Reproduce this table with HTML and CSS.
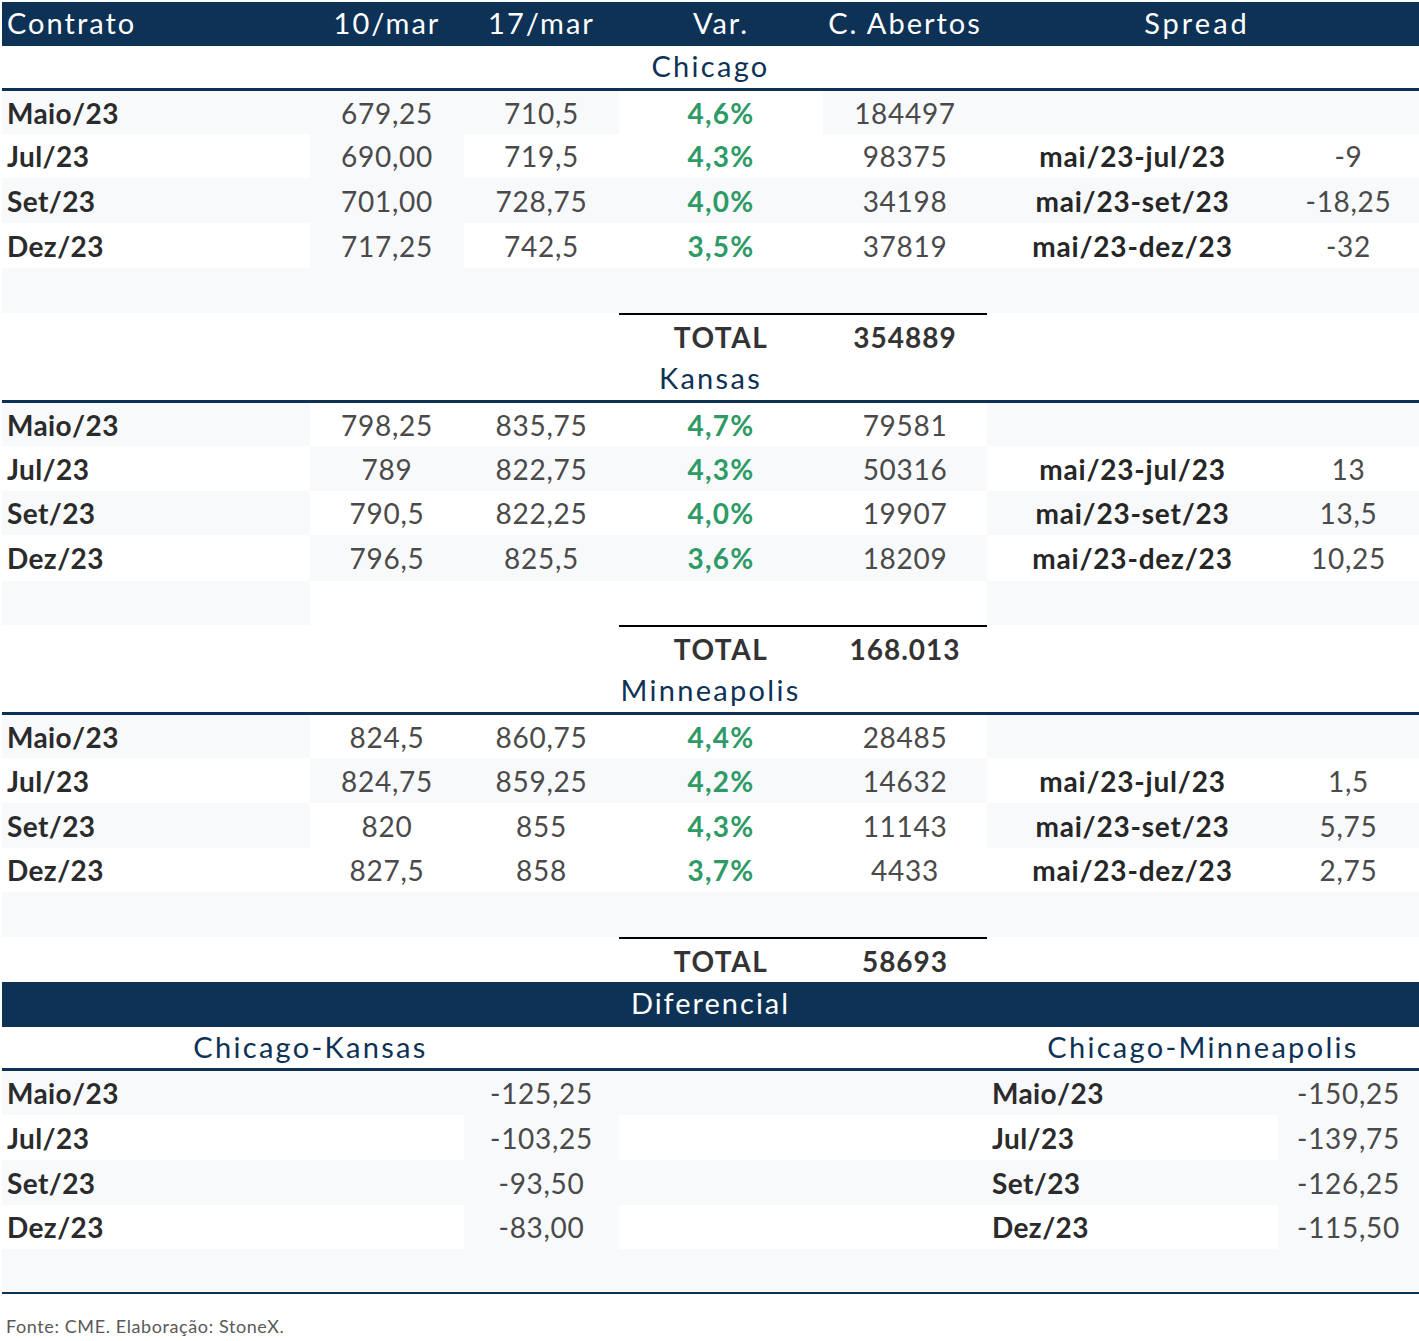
FILE: index.html
```html
<!DOCTYPE html>
<html lang="pt">
<head>
<meta charset="utf-8">
<title>Contratos de trigo</title>
<link rel="stylesheet" href="styles.css">
</head>
<body>
<div class="sheet">
  <div class="row head h44">
    <div class="c left">Contrato</div>
    <div class="c">10/mar</div>
    <div class="c">17/mar</div>
    <div class="c">Var.</div>
    <div class="c">C. Abertos</div>
    <div class="c span2 spread">Spread</div>
  </div>

  <div class="row title h45"><div class="c span7">Chicago</div></div>
  <div class="row h43">
    <div class="c lbl l">Maio/23</div><div class="c num l">679,25</div><div class="c num l">710,5</div><div class="c var">4,6%</div><div class="c num l">184497</div><div class="c l"></div><div class="c l"></div>
  </div>
  <div class="row h44">
    <div class="c lbl">Jul/23</div><div class="c num l">690,00</div><div class="c num">719,5</div><div class="c var">4,3%</div><div class="c num">98375</div><div class="c sp">mai/23-jul/23</div><div class="c num">-9</div>
  </div>
  <div class="row h45">
    <div class="c lbl l">Set/23</div><div class="c num l">701,00</div><div class="c num l">728,75</div><div class="c var l">4,0%</div><div class="c num l">34198</div><div class="c sp l">mai/23-set/23</div><div class="c num l">-18,25</div>
  </div>
  <div class="row h45">
    <div class="c lbl">Dez/23</div><div class="c num l">717,25</div><div class="c num">742,5</div><div class="c var">3,5%</div><div class="c num">37819</div><div class="c sp">mai/23-dez/23</div><div class="c num">-32</div>
  </div>
  <div class="row h45 l"></div>
  <div class="row h45">
    <div class="c"></div><div class="c"></div><div class="c"></div><div class="c tot">TOTAL</div><div class="c tot totv">354889</div><div class="c"></div><div class="c"></div>
  </div>

  <div class="row title h45"><div class="c span7">Kansas</div></div>
  <div class="row h43">
    <div class="c lbl l">Maio/23</div><div class="c num">798,25</div><div class="c num">835,75</div><div class="c var">4,7%</div><div class="c num">79581</div><div class="c l"></div><div class="c l"></div>
  </div>
  <div class="row h45">
    <div class="c lbl">Jul/23</div><div class="c num l">789</div><div class="c num l">822,75</div><div class="c var l">4,3%</div><div class="c num l">50316</div><div class="c sp">mai/23-jul/23</div><div class="c num">13</div>
  </div>
  <div class="row h44">
    <div class="c lbl l">Set/23</div><div class="c num">790,5</div><div class="c num">822,25</div><div class="c var">4,0%</div><div class="c num">19907</div><div class="c sp l">mai/23-set/23</div><div class="c num l">13,5</div>
  </div>
  <div class="row h46">
    <div class="c lbl">Dez/23</div><div class="c num l">796,5</div><div class="c num l">825,5</div><div class="c var l">3,6%</div><div class="c num l">18209</div><div class="c sp">mai/23-dez/23</div><div class="c num">10,25</div>
  </div>
  <div class="row h44">
    <div class="c l"></div><div class="c"></div><div class="c"></div><div class="c"></div><div class="c"></div><div class="c l"></div><div class="c l"></div>
  </div>
  <div class="row h45">
    <div class="c"></div><div class="c"></div><div class="c"></div><div class="c tot">TOTAL</div><div class="c tot totv">168.013</div><div class="c"></div><div class="c"></div>
  </div>

  <div class="row title h45"><div class="c span7">Minneapolis</div></div>
  <div class="row h43">
    <div class="c lbl l">Maio/23</div><div class="c num">824,5</div><div class="c num">860,75</div><div class="c var">4,4%</div><div class="c num">28485</div><div class="c l"></div><div class="c l"></div>
  </div>
  <div class="row h45">
    <div class="c lbl">Jul/23</div><div class="c num l">824,75</div><div class="c num l">859,25</div><div class="c var l">4,2%</div><div class="c num l">14632</div><div class="c sp">mai/23-jul/23</div><div class="c num">1,5</div>
  </div>
  <div class="row h45">
    <div class="c lbl l">Set/23</div><div class="c num">820</div><div class="c num">855</div><div class="c var">4,3%</div><div class="c num">11143</div><div class="c sp l">mai/23-set/23</div><div class="c num l">5,75</div>
  </div>
  <div class="row h44">
    <div class="c lbl">Dez/23</div><div class="c num">827,5</div><div class="c num">858</div><div class="c var">3,7%</div><div class="c num">4433</div><div class="c sp">mai/23-dez/23</div><div class="c num">2,75</div>
  </div>
  <div class="row h45 l"></div>
  <div class="row h45">
    <div class="c"></div><div class="c"></div><div class="c"></div><div class="c tot">TOTAL</div><div class="c tot totv">58693</div><div class="c"></div><div class="c"></div>
  </div>

  <div class="row head h45"><div class="c span7">Diferencial</div></div>
  <div class="row title h44">
    <div class="c span3">Chicago-Kansas</div><div class="c span2"></div><div class="c span2">Chicago-Minneapolis</div>
  </div>
  <div class="row h44 l">
    <div class="c lbl">Maio/23</div><div class="c"></div><div class="c num">-125,25</div><div class="c"></div><div class="c"></div><div class="c lbl">Maio/23</div><div class="c num">-150,25</div>
  </div>
  <div class="row h45">
    <div class="c lbl">Jul/23</div><div class="c"></div><div class="c num l">-103,25</div><div class="c"></div><div class="c"></div><div class="c lbl">Jul/23</div><div class="c num l">-139,75</div>
  </div>
  <div class="row h45 l">
    <div class="c lbl">Set/23</div><div class="c"></div><div class="c num">-93,50</div><div class="c"></div><div class="c"></div><div class="c lbl">Set/23</div><div class="c num">-126,25</div>
  </div>
  <div class="row h44">
    <div class="c lbl">Dez/23</div><div class="c"></div><div class="c num l">-83,00</div><div class="c"></div><div class="c"></div><div class="c lbl">Dez/23</div><div class="c num l">-115,50</div>
  </div>
  <div class="row last h45 l"></div>
</div>
<p class="note">Fonte: CME. Elaboração: StoneX.</p>
</body>
</html>
```

FILE: styles.css
```css
html, body {
  margin: 0;
  padding: 0;
  background: #ffffff;
}
body {
  padding: 2px 0 0 2px;
  font-family: Lato, "Open Sans", sans-serif;
  color: #333333;
}
.sheet {
  width: 1417px;
}
.row {
  display: grid;
  grid-template-columns: 308px 154px 155px 204px 164px 291px 141px;
  box-sizing: border-box;
}
.h43 { height: 43px; }
.h44 { height: 44px; }
.h45 { height: 45px; }
.h46 { height: 46px; }
.c {
  display: flex;
  align-items: center;
  justify-content: center;
  font-size: 28px;
  white-space: nowrap;
  box-sizing: border-box;
  min-width: 0;
}
.span2 { grid-column: span 2; }
.span3 { grid-column: span 3; }
.span7 { grid-column: span 7; }
.l { background: #f8f9fb; }
.head {
  background: #0d3255;
  color: #ffffff;
}
.head .c {
  font-size: 29px;
  letter-spacing: 2px;
  padding-bottom: 4px;
}
.head .left {
  justify-content: flex-start;
  padding-left: 5px;
}
.head .spread {
  padding-right: 12px;
  letter-spacing: 3px;
}
.title {
  border-bottom: 3px solid #0d3255;
}
.title .c {
  color: #0d3255;
  font-size: 29px;
  letter-spacing: 2.3px;
  padding-bottom: 3px;
}
.lbl {
  justify-content: flex-start;
  padding-left: 5px;
  font-weight: 700;
  letter-spacing: 0.4px;
  color: #2b2b2b;
}
.num {
  color: #4a4a4a;
  letter-spacing: 0.7px;
}
.var {
  font-weight: 700;
  letter-spacing: 1.2px;
  color: #2e9b66;
}
.sp {
  font-weight: 700;
  letter-spacing: 0.8px;
  color: #262626;
}
.tot {
  border-top: 2px solid #000000;
  font-weight: 700;
  letter-spacing: 1.5px;
  color: #333333;
}
.totv {
  letter-spacing: 1px;
}
.last {
  border-bottom: 2px solid #0d3255;
}
.note {
  margin: 21px 0 0 4px;
  font-size: 18px;
  letter-spacing: 0.6px;
  color: #595959;
}
```
